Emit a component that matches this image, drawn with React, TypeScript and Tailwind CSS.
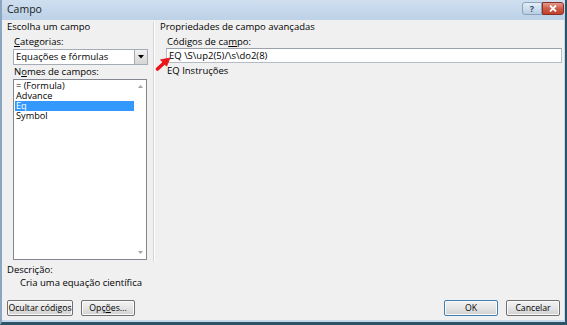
import React from "react";

const font = { fontFamily: '"Open Sans", "Noto Sans", sans-serif' };

function Btn({ label, w, isDefault }: { label: React.ReactNode; w: string; isDefault?: boolean }) {
  return (
    <div
      className={`${w} h-[16px] rounded-[2px] border ${
        isDefault ? "border-[#3c7fb1]" : "border-[#707070]"
      } bg-gradient-to-b from-[#f3f3f3] via-[#e5e5e5] to-[#d0d0d0] flex items-center justify-center whitespace-nowrap text-[8.7px] leading-none text-black shadow-[inset_0_0_0_1px_#fbfbfb]`}
    >
      {label}
    </div>
  );
}

export default function App() {
  return (
    <div
      className="relative w-[567px] h-[325px] flex flex-col bg-[#c6d9ec] border-l-[2px] border-l-[#8ba6c0] border-r-[2px] border-r-[#2c5366] border-b-[3px] border-b-[#2c5366] overflow-hidden"
      style={font}
    >
      {/* title bar */}
      <div className="h-[20px] flex items-start bg-gradient-to-b from-[#cfdff0] to-[#bcd1e7]">
        <div className="pl-[5px] pt-[3px] text-[10.5px] leading-[13px] text-[#1b1b1b]">Campo</div>
        <div className="ml-auto mr-[1px] mt-[2px] flex">
          <div className="w-[20px] h-[13px] rounded-l-[3px] border border-[#8ba4bd] bg-gradient-to-b from-[#e4edf6] to-[#b9cde2] flex items-center justify-center text-[9px] font-bold leading-none text-[#34526e]">
            ?
          </div>
          <div className="w-[22px] h-[13px] rounded-r-[3px] border border-[#8a2f24] bg-gradient-to-b from-[#e49b8e] via-[#cf5b48] to-[#c23e2c] flex items-center justify-center">
            <svg width="8" height="7" viewBox="0 0 8 7">
              <path d="M1 0.5 L7 6.5 M7 0.5 L1 6.5" stroke="#ffffff" strokeWidth="1.8" />
            </svg>
          </div>
        </div>
      </div>

      {/* client area */}
      <div className="flex-1 mr-[1px] mb-[2px] bg-[#f0f0f0] flex flex-col text-[9.5px] leading-[10px] text-black">
        <div className="h-[242px] flex">
          {/* left column */}
          <div className="w-[151px] flex flex-col pt-[2px]">
            <div className="pl-[5px] h-[10px]">Escolha um campo</div>
            <div className="pl-[12px] mt-[5px] h-[10px]">
              <span className="underline">C</span>ategorias:
            </div>
            <div className="ml-[11px] mt-[2px] w-[135px] h-[16px] border border-[#a5acb5] bg-white flex items-center">
              <div className="flex-1 pl-[2px]">Equações e fórmulas</div>
              <div className="w-[13px] h-[14px] border-l border-[#a5acb5] bg-gradient-to-b from-[#f2f2f2] to-[#d5d5d5] flex items-center justify-center">
                <svg width="6" height="4" viewBox="0 0 6 4">
                  <path d="M0 0 H6 L3 3.5 Z" fill="#000" />
                </svg>
              </div>
            </div>
            <div className="pl-[12px] mt-[2px] h-[10px]">
              N<span className="underline">o</span>mes de campos:
            </div>
            <div className="ml-[11px] mt-[2px] w-[134px] h-[181px] border border-[#828790] bg-white flex">
              <div className="flex-1 pt-[1px] pl-[1px] text-[9.2px]">
                <div className="h-[10px] pl-[1px]">= (Formula)</div>
                <div className="h-[10px] pl-[1px]">Advance</div>
                <div className="h-[10px] pl-[1px] bg-[#3399ff] text-white">Eq</div>
                <div className="h-[10px] pl-[1px]">Symbol</div>
              </div>
              <div className="w-[12px] flex flex-col items-center justify-between py-[5px]">
                <svg width="5" height="3" viewBox="0 0 5 3">
                  <path d="M0 3 L2.5 0 L5 3 Z" fill="#a3a3a3" />
                </svg>
                <svg width="5" height="3" viewBox="0 0 5 3">
                  <path d="M0 0 H5 L2.5 3 Z" fill="#a3a3a3" />
                </svg>
              </div>
            </div>
          </div>

          {/* divider */}
          <div className="mt-[2px] w-[2px] border-l border-[#d5d5d5] bg-white" />

          {/* right column */}
          <div className="flex-1 flex flex-col pt-[2px]">
            <div className="pl-[5px] h-[10px]">Propriedades de campo avançadas</div>
            <div className="pl-[12px] mt-[5px] h-[10px]">
              Códigos de ca<span className="underline">m</span>po:
            </div>
            <div className="ml-[11px] mr-[2px] mt-[1px] h-[15px] border border-[#b5bcc4] border-t-[#9aa1a8] bg-white flex items-center pl-[2px]">
              EQ \S\up2(5)/\s\do2(8)
            </div>
            <div className="pl-[12px] mt-[3px] h-[10px]">EQ Instruções</div>
          </div>
        </div>

        <div className="pl-[5px] mt-[3px] h-[10px]">Descrição:</div>
        <div className="pl-[18px] mt-[3px] h-[10px]">Cria uma equação científica</div>

        <div className="mt-[12px] flex pl-[5px] pr-[4px]">
          <Btn label="Ocultar códigos" w="w-[66px]" />
          <div className="ml-[8px]">
            <Btn label={<span>Opç<span className="underline">õ</span>es...</span>} w="w-[54px]" />
          </div>
          <div className="ml-auto flex gap-[8px]">
            <Btn label="OK" w="w-[54px]" isDefault />
            <Btn label="Cancelar" w="w-[54px]" />
          </div>
        </div>
      </div>

      {/* red arrow overlay */}
      <svg className="absolute left-[151px] top-[53px]" width="20" height="19" viewBox="0 0 20 19">
        <path d="M4.5 16 L11 10" stroke="#e8161b" strokeWidth="3.6" strokeLinecap="round" />
        <path d="M17 5 L7.5 6.8 L13.6 13.2 Z" fill="#e8161b" stroke="#e8161b" strokeWidth="0.8" strokeLinejoin="round" />
      </svg>
    </div>
  );
}
